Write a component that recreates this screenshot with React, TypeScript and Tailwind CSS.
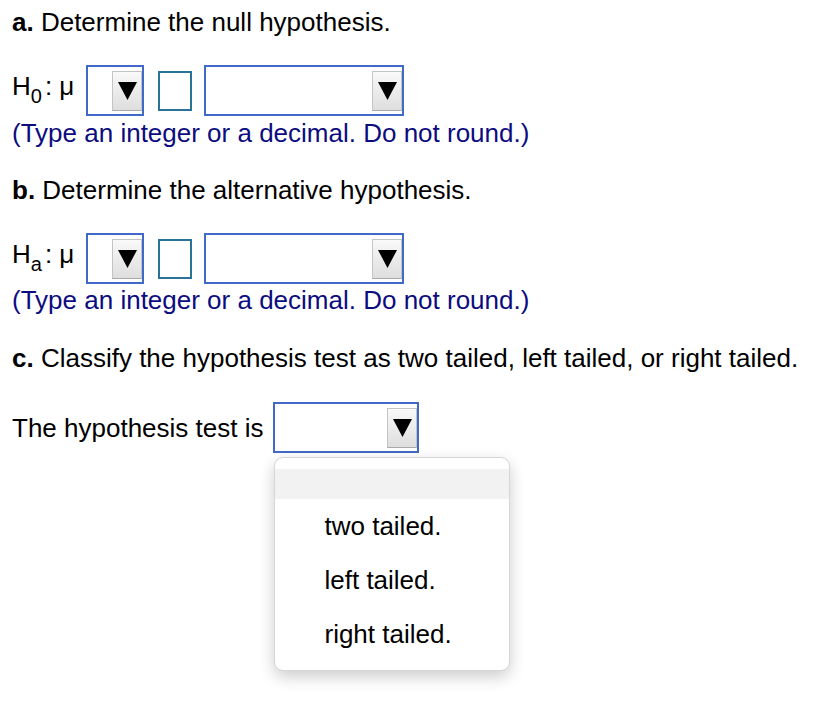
import React from "react";

function Arrow() {
  return (
    <div className="w-[30px] h-[40px] flex items-center justify-center border border-[#c4c4c4] border-b-[#a9a9a9] bg-gradient-to-b from-[#f9f9f9] to-[#dedede]">
      <svg width="19" height="18" viewBox="0 0 19 18">
        <polygon points="0,0 19,0 9.5,18" fill="#000" />
      </svg>
    </div>
  );
}

function Select({ w }: { w: string }) {
  return (
    <div className={`${w} h-[51px] border-2 border-[#4169c7] flex items-center justify-end bg-white`}>
      <Arrow />
    </div>
  );
}

function Hyp({ sub }: { sub: string }) {
  return (
    <div className="flex items-center">
      <span className="w-[74px] whitespace-nowrap">
        H<span className="text-[20px] align-[-8px] mr-[3px]">{sub}</span>: μ
      </span>
      <div className="flex items-center gap-[14px]">
        <Select w="w-[58px]" />
        <div className="flex items-center gap-[12px]">
          <div className="w-[34px] h-[40px] border-2 border-[#2b7396]" />
          <Select w="w-[200px]" />
        </div>
      </div>
    </div>
  );
}

export default function App() {
  return (
    <div className="min-h-[722px] bg-white pl-[12px] pt-[7px] text-black text-[26px] leading-[30px] font-['Liberation_Sans',Arial,sans-serif]">
      <p>
        <b>a.</b> Determine the null hypothesis.
      </p>
      <div className="mt-[28px]">
        <Hyp sub="0" />
      </div>
      <p className="mt-[2px] text-[#0c0c80]">(Type an integer or a decimal. Do not round.)</p>

      <p className="mt-[27px]">
        <b>b.</b> Determine the alternative hypothesis.
      </p>
      <div className="mt-[28px]">
        <Hyp sub="a" />
      </div>
      <p className="mt-[1px] text-[#0c0c80]">(Type an integer or a decimal. Do not round.)</p>

      <p className="mt-[28px]">
        <b>c.</b> Classify the hypothesis test as two tailed, left tailed, or right tailed.
      </p>
      <div className="mt-[29px] flex items-center gap-[10px]">
        <span>The hypothesis test is</span>
        <div className="relative">
          <Select w="w-[146px]" />
          <div className="absolute left-[1px] top-[55px] w-[236px] h-[214px] rounded-[9px] border border-[#d6d6d6] bg-white shadow-[0_6px_16px_rgba(0,0,0,0.2)] pt-[11px]">
            <div className="h-[30px] bg-[#f2f2f2]" />
            <ul>
              {["two tailed.", "left tailed.", "right tailed."].map((o) => (
                <li key={o} className="h-[54px] flex items-center pl-[49px]">
                  {o}
                </li>
              ))}
            </ul>
          </div>
        </div>
      </div>
    </div>
  );
}
